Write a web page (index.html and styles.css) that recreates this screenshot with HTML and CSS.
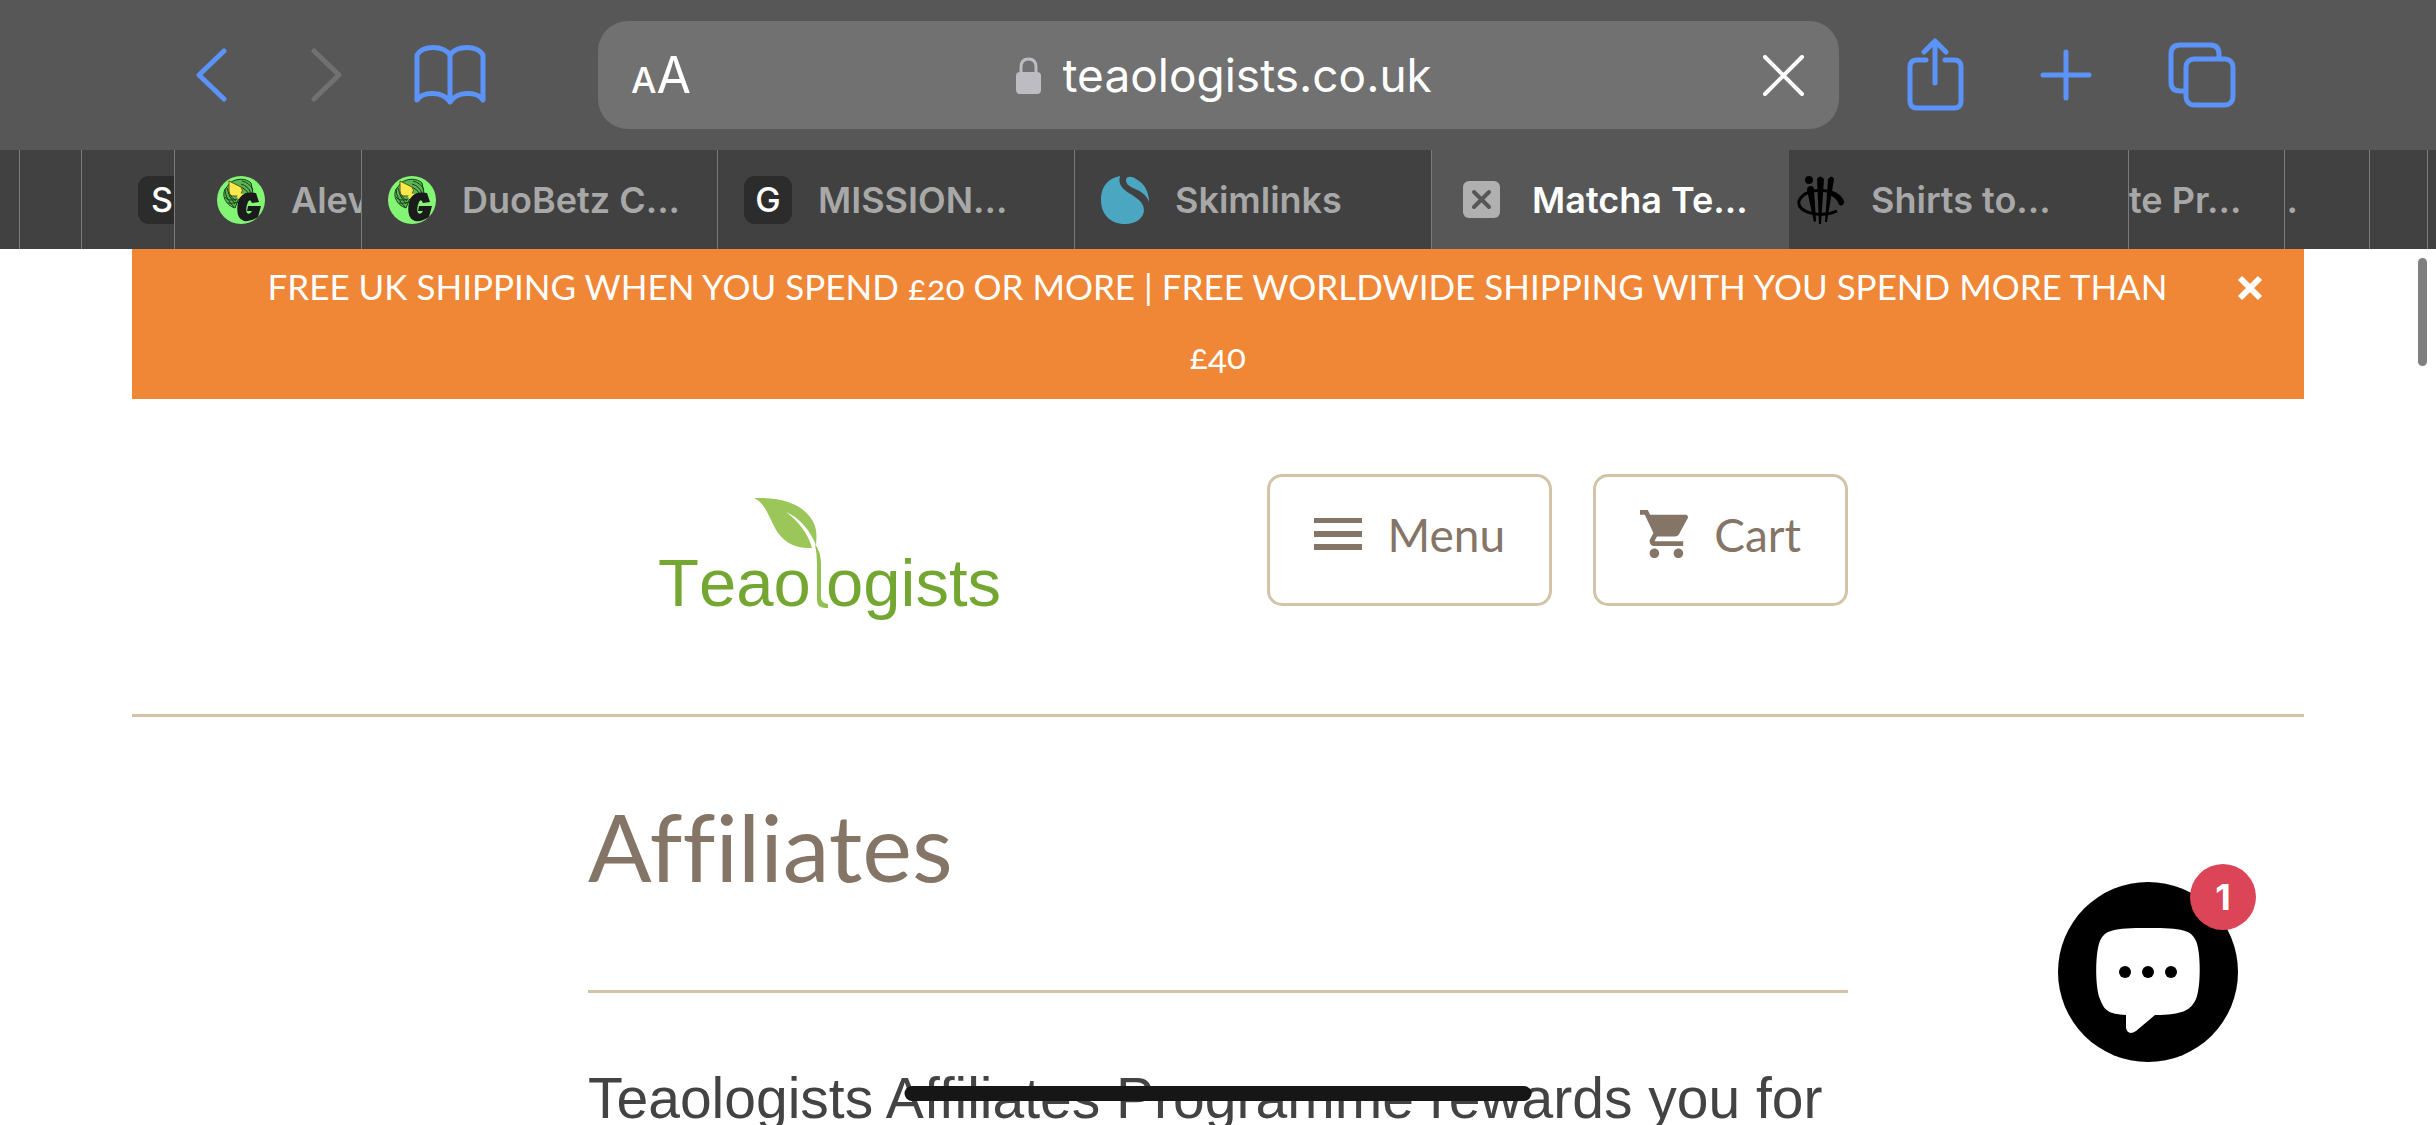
FILE: index.html
```html
<!DOCTYPE html>
<html lang="en">
<head>
<meta charset="utf-8">
<title>Affiliates – Teaologists</title>
<meta name="viewport" content="width=device-width, initial-scale=1">
<link rel="stylesheet" href="styles.css">
</head>
<body>
<svg class="defs" aria-hidden="true">
  <symbol id="duobetz" viewBox="0 0 48 48">
    <circle cx="24" cy="24" r="24" fill="#83f575"/>
    <path d="M13 7C19 2 29 2 34 7L36 17L22 22L18 32C8 29 4 18 9 12Z" fill="#5cb552" stroke="#17401a" stroke-width="1"/>
    <path d="M25 5Q33 7 36 14M24 8Q31 10 34 17M24 11Q29 13 32 18M8 13Q8 22 17 31M10 12Q11 20 18 28M12 17Q14 22 19 25M8 21Q12 26 20 23M11 27Q15 28 21 26" fill="none" stroke="#17401a" stroke-width="1"/>
    <path d="M12 5L24 11Q27 14 24 18L20 20L15 20Q12 19 12 15Z" fill="#fbea4d" stroke="#5b5514" stroke-width="1"/>
    <path d="M20 20L22 17L27 18L25 22L21 23Z" fill="#fbea4d"/>
    <path d="M39 17Q24 14 21 26Q18 42 27 45Q34 46 41 41L44 30L31 30L30 35L35 35Q33 39 30 37Q28 33 31 26Q33 22 35 27L42 26Z" fill="#1b1b1b"/>
  </symbol>
</svg>

<header class="browser">
  <div class="toolbar">
    <nav class="tools tools-left" aria-label="History">
      <button class="tool back" aria-label="Back"><svg width="31" height="54" viewBox="0 0 31 54"><path d="M28 3L3 27L28 51"/></svg></button>
      <button class="tool forward" aria-label="Forward" disabled><svg width="31" height="54" viewBox="0 0 31 54"><path d="M3 3L28 27L3 51"/></svg></button>
      <button class="tool book" aria-label="Bookmarks"><svg width="72" height="60" viewBox="0 0 72 60"><path d="M36 57V10C29 0 9 0 3 10V55C9 46 29 46 36 57C43 46 63 46 69 55V10C63 0 43 0 36 10"/></svg></button>
    </nav>
    <form class="address">
      <button class="reader" type="button" aria-label="Reader options"><span class="small-a">A</span><span class="large-a">A</span></button>
      <div class="location">
        <svg width="25" height="37" viewBox="0 0 25 37" aria-hidden="true"><rect y="15" width="25" height="22" rx="4" fill="#bcbcc2"/><path d="M5 17V10Q5 2 12.500 2Q20 2 20 10V17" fill="none" stroke="#bcbcc2" stroke-width="3"/></svg>
        <input class="url" type="text" value="teaologists.co.uk" aria-label="Address">
      </div>
      <button class="tool stop" type="button" aria-label="Stop loading"><svg width="41" height="41" viewBox="0 0 41 41"><path d="M2 2L39 39M39 2L2 39"/></svg></button>
    </form>
    <nav class="tools tools-right" aria-label="Page actions">
      <button class="tool" aria-label="Share"><svg width="57" height="74" viewBox="0 0 57 74"><path d="M19 22H10Q3 22 3 29V63Q3 70 10 70H47Q54 70 54 63V29Q54 22 47 22H38M28 45V3M17 14L28 3L39 14"/></svg></button>
      <button class="tool" aria-label="New tab"><svg width="52" height="52" viewBox="0 0 52 52"><path d="M26 3V49M3 26H49"/></svg></button>
      <button class="tool" aria-label="All tabs"><svg width="68" height="66" viewBox="0 0 68 66"><path d="M17 49H12Q3 49 3 40V12Q3 3 12 3H42Q51 3 51 12V16"/><rect x="18" y="17" width="47" height="46" rx="8"/></svg></button>
    </nav>
  </div>

  <nav class="tabs" aria-label="Open tabs">
    <a class="tab tab-cut" href="#" aria-label="Tab"></a>
    <a class="tab tab-cut" href="#" aria-label="Tab"></a>
    <a class="tab tab-inset-far" href="#"><span class="letter">S</span></a>
    <a class="tab tab-inset" href="#"><svg class="favicon"><use href="#duobetz"/></svg><span>Alev</span></a>
    <a class="tab" href="#"><svg class="favicon"><use href="#duobetz"/></svg><span>DuoBetz C...</span></a>
    <a class="tab" href="#"><span class="letter">G</span><span>MISSION...</span></a>
    <a class="tab" href="#"><svg class="favicon" viewBox="0 0 48 48"><path d="M19 0C4 3 0 14 0 24C0 38 9 48 24 48C36 48 43 41 43 34C43 18 14 18 19 0Z" fill="#4ba6c2"/><path d="M25 4C25 0 31 0 35 3C44 8 48 16 48 26C43 11 25 14 25 4Z" fill="#4ba6c2"/></svg><span>Skimlinks</span></a>
    <a class="tab tab-active" href="#" aria-current="page"><svg class="close-tab" viewBox="0 0 37 37"><rect width="37" height="37" rx="6" fill="#b0b0b0"/><path d="M11 11L26 26M26 11L11 26" stroke="#575757" stroke-width="4" stroke-linecap="round"/></svg><span>Matcha Te...</span></a>
    <a class="tab tab-tight" href="#"><svg class="favicon" viewBox="0 0 48 48"><circle cx="12" cy="4" r="4"/><path d="M10 14Q10 10 14 10Q17 10 17 14L19 45L17 46ZM20 3Q23 -2 27 3L24 48H22ZM31 3Q35 -2 37 3L30 46H28Z"/><path d="M46 27C42 11 8 10 2 25C-1 37 25 42 40 35" fill="none" stroke="#000" stroke-width="3"/><path d="M36 18Q42 21 44 27" fill="none" stroke="#000" stroke-width="5" stroke-linecap="round"/></svg><span>Shirts to...</span></a>
    <a class="tab tab-cut" href="#"><span>te Pr...</span></a>
    <a class="tab tab-cut tab-sliver" href="#"><span>..</span></a>
    <a class="tab tab-cut" href="#" aria-label="Tab"></a>
    <a class="tab tab-cut" href="#" aria-label="Tab"></a>
  </nav>
</header>

<div class="site">
  <div class="banner">
    <p class="banner-text">FREE UK SHIPPING WHEN YOU SPEND £20 OR MORE | FREE WORLDWIDE SHIPPING WITH YOU SPEND MORE THAN £40</p>
    <button class="banner-close" aria-label="Dismiss"><svg width="26" height="26" viewBox="0 0 26 26"><path d="M3 3L23 23M23 3L3 23" stroke="#fff" stroke-width="6"/></svg></button>
  </div>

  <div class="site-header">
    <div class="column header-row">
      <a class="logo" href="#" aria-label="Teaologists">
        <svg width="360" height="132" viewBox="0 0 360 132">
          <g class="logo-text"><text x="0" y="108">Teao</text><text x="168" y="108">ogists</text></g>
          <path d="M96 0C126 -1 143 7 152 19C159 28 159 36 158 47C153 35 143 20 128 14C140 23 150 35 154 50C136 51 124 43 117 30C110 17 107 5 96 0Z" fill="#9bc659"/>
          <path d="M157 46Q163 54 163 66V99Q163 105 170 106V110Q159 111 159 102V66Q159 56 157 46Z" fill="#93c150"/>
        </svg>
      </a>
      <nav class="site-nav" aria-label="Site">
        <button class="site-button"><svg width="48" height="48" viewBox="0 0 48 48"><path d="M0 8H48V13H0ZM0 21H48V27H0ZM0 34H48V40H0Z"/></svg>Menu</button>
        <button class="site-button"><svg width="48" height="48" viewBox="1 2 20 20"><path d="M7 18c-1.100 0-1.990.9-1.990 2S5.900 22 7 22s2-.9 2-2-.9-2-2-2zM1 2v2h2l3.600 7.590-1.350 2.450c-.16.280-.25.610-.25.960 0 1.100.9 2 2 2h12v-2H7.420c-.14 0-.25-.11-.25-.25l.03-.12.900-1.630h7.450c.75 0 1.410-.41 1.750-1.030l3.580-6.490A1.003 1.003 0 0 0 20 4H5.210l-.94-2H1zm16 16c-1.100 0-1.990.9-1.990 2s.89 2 1.990 2 2-.9 2-2-.9-2-2-2z"/></svg>Cart</button>
      </nav>
    </div>
  </div>

  <main class="column">
    <h1>Affiliates</h1>
    <p class="intro">Teaologists Affiliates Programme rewards you for</p>
  </main>
</div>

<button class="chat" aria-label="Open chat, 1 new message">
  <svg width="180" height="180" viewBox="0 0 180 180"><circle cx="90" cy="90" r="90"/><path d="M90 46C125 46 133 48 138 59C143 70 143 106 138 117C133 128 125 133 97 133L78 149Q70 154 68 146V133C50 132 46 128 42 117C37 106 37 70 42 59C47 48 55 46 90 46Z" fill="#fff"/><circle cx="67" cy="90" r="6"/><circle cx="90" cy="90" r="6"/><circle cx="113" cy="90" r="6"/></svg>
  <span class="badge">1</span>
</button>
<div class="scroll-thumb"></div>
<div class="home-bar"></div>
</body>
</html>
```
FILE: styles.css
```css
* { box-sizing: border-box; }

html, body { height: 100%; }

body {
  margin: 0;
  overflow: hidden;
  background: #fff;
  font-family: Lato, "Open Sans", sans-serif;
  color: #434343;
}

button {
  margin: 0;
  padding: 0;
  border: 0;
  background: none;
  font: inherit;
  color: inherit;
}

a { color: inherit; text-decoration: none; }
svg { display: block; flex: none; }
.defs { position: absolute; width: 0; height: 0; }

/* Browser chrome */
.browser { font-family: Inter, "Liberation Sans", sans-serif; }

.toolbar {
  display: flex;
  align-items: center;
  height: 150px;
  padding: 0 200px 0 196px;
  background: #575757;
}

.tools { display: flex; align-items: center; }
.tools-left { margin-right: 112px; }
.tools-right { margin-left: 68px; gap: 76px; }
.back { margin-right: 84px; }
.forward { margin-right: 72px; }

.tool svg {
  fill: none;
  stroke: #5b93f8;
  stroke-width: 5;
  stroke-linecap: round;
  stroke-linejoin: round;
}
.forward svg { stroke: #717171; }
.stop svg { stroke: #fff; stroke-width: 4; }

.address {
  flex: 1;
  display: flex;
  align-items: center;
  justify-content: space-between;
  height: 108px;
  padding: 0 35px 0 33px;
  border-radius: 30px;
  background: #717171;
  color: #fff;
}

.reader { display: flex; align-items: baseline; }
.small-a { font-size: 36px; font-weight: 500; }
.large-a { font-size: 50px; }

.location { display: flex; align-items: center; gap: 22px; }

.url {
  width: 376px;
  padding: 0;
  border: 0;
  background: none;
  font: inherit;
  font-size: 46px;
  color: inherit;
}

.tabs {
  display: grid;
  grid-template-columns: 20fr 62fr 93fr 187fr 356fr 357fr 357fr 357fr 340fr 156fr 85fr 58fr 8fr;
  height: 99px;
  background: #414141;
  color: #a8a8a8;
  font-size: 36px;
  font-weight: 600;
}

.tab {
  display: flex;
  align-items: center;
  gap: 26px;
  min-width: 0;
  padding-left: 26px;
  overflow: hidden;
  border-right: 1px solid #7c7c7c;
  white-space: nowrap;
}
.tab:last-child { border-right: 0; }
.tab-inset { padding-left: 42px; }
.tab-inset-far { padding-left: 56px; }
.tab-tight { padding-left: 8px; }
.tab-cut { padding-left: 0; }
.tab-sliver { text-indent: -10px; }
.tab-active {
  gap: 32px;
  padding-left: 31px;
  border-right: 0;
  background: #575757;
  color: #fff;
}

.favicon { width: 48px; height: 48px; }
.close-tab { width: 37px; height: 37px; }

.letter {
  flex: none;
  width: 48px;
  border-radius: 11px;
  background: #2c2c2c;
  color: #fff;
  font-size: 34px;
  font-weight: 500;
  line-height: 48px;
  text-align: center;
}

/* Shop page */
.site { margin: 0 132px; }

.banner {
  display: flex;
  align-items: flex-start;
  padding: 3px 41px 9px 114px;
  background: #ef8737;
  color: #fff;
}

.banner-text {
  flex: 1;
  margin: 0;
  font-size: 35px;
  font-variant-numeric: oldstyle-nums;
  line-height: 69px;
  text-align: center;
}
.banner-close { margin: 23px 0 0 48px; }

.column {
  max-width: 1260px;
  margin: 0 auto;
}

.site-header {
  padding: 75px 0 84px;
  border-bottom: 3px solid #d3c3a9;
}
.header-row {
  display: flex;
  align-items: flex-start;
  justify-content: space-between;
}

.logo { margin: 24px 0 0 70px; }
.logo-text {
  fill: #74a732;
  font-family: "Liberation Sans", Arial, sans-serif;
  font-size: 67px;
  font-kerning: none;
}

.site-nav { display: flex; gap: 41px; }

.site-button {
  display: flex;
  align-items: center;
  gap: 26px;
  height: 132px;
  padding: 0 44px 12px;
  border: 3px solid #d3c3a9;
  border-radius: 15px;
  color: #857567;
  font-size: 46px;
}
.site-button svg { fill: #857567; }

h1 {
  margin: 0;
  padding: 39px 0 54px;
  border-bottom: 3px solid #d3c3a9;
  color: #857567;
  font-size: 94px;
  font-variant-ligatures: none;
  font-weight: 400;
  line-height: 180px;
}

.intro {
  margin: 63px 0 0;
  font-family: "Liberation Sans", Arial, sans-serif;
  font-size: 57px;
  line-height: 84px;
}

/* Overlays */
.chat {
  position: fixed;
  right: 198px;
  bottom: 63px;
}

.badge {
  position: absolute;
  top: -18px;
  right: -18px;
  width: 66px;
  border-radius: 50%;
  background: #dc4458;
  color: #fff;
  font-family: Inter, sans-serif;
  font-size: 36px;
  font-weight: 700;
  line-height: 66px;
  text-align: center;
}

.scroll-thumb {
  position: fixed;
  top: 258px;
  right: 9px;
  width: 9px;
  height: 108px;
  border-radius: 5px;
  background: #7f7f7f;
}

.home-bar {
  position: fixed;
  bottom: 24px;
  left: 50%;
  width: 627px;
  height: 15px;
  border-radius: 8px;
  background: #161616;
  transform: translateX(-50%);
}
```
